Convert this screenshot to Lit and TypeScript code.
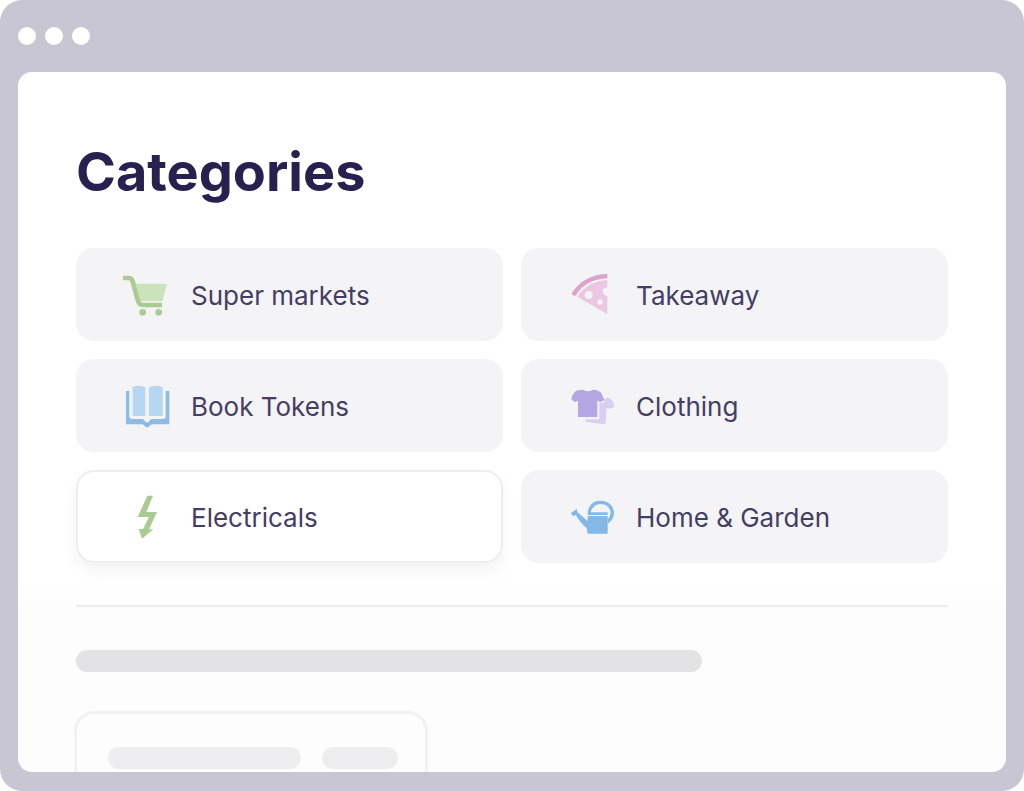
import { LitElement, html, svg, css } from "lit";
import { customElement, state } from "lit/decorators.js";

const cart = svg`
  <path fill="#cbe2bb" d="M77 71H171L158 121Q157 124 153 124H93Q90 124 89 120Z"/>
  <path fill="none" stroke="#aacb92" stroke-width="14" stroke-linejoin="round" d="M39 54H55Q65 54 68 64L83 120Q87 135 98 135H156"/>
  <circle fill="#aacb92" cx="98" cy="157" r="10"/>
  <circle fill="#aacb92" cx="146" cy="157" r="10"/>`;

const book = svg`
  <path fill="#8dbbe3" d="M48 57H58V133Q58 141 66 141H96Q101 141 103 145Q111 158 120 145Q122 141 127 141H159Q167 141 167 133V57H178V157H128Q122 157 119 162Q111 170 104 162Q101 157 96 157H48Z"/>
  <path fill="#b5d7f1" d="M68 45Q88 37 106 46V132H68Z"/>
  <path fill="#b5d7f1" d="M117 46Q138 37 158 45V132H117Z"/>`;

const bolt = svg`
  <path fill="#abcb95" d="M112 35H129L109 84H141L117 136H130L96 164L86 135H99L117 99H83Z"/>`;

const pizza = svg`
  <path fill="#dda3cd" d="M50 100Q85 44 157 41V55Q93 58 64 104Q60 109 55 106Q50 104 50 100Z"/>
  <path fill="#ebc7e3" fill-rule="evenodd" d="M67 110Q98 64 157 60V82Q143 84 143 94Q143 104 157 109V163Z
    M89 105a12 12 0 1 0 24 0a12 12 0 1 0-24 0Z M127 126a8 8 0 1 0 16 0a8 8 0 1 0-16 0Z"/>`;

const shirts = svg`
  <path fill="#d9cff0" d="M147 82Q153 80 157 75Q168 80 173 87L179 104L165 110L155 109L151 157Q120 152 92 149V142H133V92H147Z"/>
  <path fill="#b5a7e3" d="M85 53Q98 62 113 53Q132 54 139 63L148 84L135 91L127 85V135H69V86L60 91L49 82Q54 58 68 55Z"/>`;

const can = svg`
  <path fill="#83b9e7" d="M48 87L65 75L67 84L98 111V96H158V149H98L95 132Q82 124 62 93L54 97Z"/>
  <path fill="#83b9e7" d="M98 93V86Q101 58 126 51Q153 46 170 65Q184 88 170 108Q165 115 158 119V107Q169 94 166 80Q158 59 136 60Q116 60 108 82L107 85H158V93Z"/>`;

interface Category {
  name: string;
  icon: unknown;
  top: number;
}

const categories: Category[] = [
  { name: "Super markets", icon: cart, top: 33 },
  { name: "Takeaway", icon: pizza, top: 33 },
  { name: "Book Tokens", icon: book, top: 30 },
  { name: "Clothing", icon: shirts, top: 30 },
  { name: "Electricals", icon: bolt, top: 27 },
  { name: "Home & Garden", icon: can, top: 27 },
];

@customElement("app-root")
export class AppRoot extends LitElement {
  @state() private selected = "Electricals";

  static styles = css`
    :host {
      display: block;
      background: #fff;
      font-family: Inter, "Liberation Sans", sans-serif;
    }
    * { box-sizing: border-box; }
    .window {
      display: flex;
      flex-direction: column;
      height: 100vh;
      padding: 0 18px 19px;
      border-radius: 22px;
      background: #c9c6d3;
    }
    .bar {
      display: flex;
      align-items: center;
      gap: 9px;
      flex: 0 0 72px;
    }
    .dot {
      width: 18px;
      height: 18px;
      border-radius: 50%;
      background: #fff;
    }
    .page {
      flex: 1;
      min-height: 0;
      overflow: hidden;
      padding: 64px 58px 0;
      border-radius: 14px;
      background: linear-gradient(#fff 500px, #fdfdfd 540px);
    }
    h1 {
      margin: 0 0 40px;
      color: #28214f;
      font-size: 54px;
      line-height: 72px;
      font-weight: 700;
    }
    .grid {
      display: grid;
      grid-template-columns: 1fr 1fr;
      gap: 18px;
    }
    .card {
      display: flex;
      align-items: center;
      gap: 21px;
      min-height: 93px;
      padding: 0 46px;
      border: 0;
      border-radius: 18px;
      background: #f4f4f6;
      color: #443d64;
      font: inherit;
      font-size: 26px;
      line-height: 32px;
      text-align: left;
      cursor: pointer;
    }
    .label { padding-top: 3px; }
    .selected {
      background: #fff;
      box-shadow: inset 0 0 0 2px #eeeef0, 0 8px 16px rgba(0, 0, 0, 0.05);
    }
    .icon {
      flex: none;
      width: 48px;
      height: 47px;
    }
    .rule {
      height: 2px;
      margin: 42px 0 43px;
      border: 0;
      background: #eeeeef;
    }
    .line {
      height: 22px;
      border-radius: 11px;
      background: #eeeef0;
    }
    .lead {
      width: 71.8%;
      background: #e3e3e5;
    }
    .panel {
      display: flex;
      gap: 21px;
      width: 40.6%;
      height: 160px;
      margin: 39px 0 0 -2px;
      padding: 33px 27px 0 31px;
      border: 3px solid #f2f2f3;
      border-radius: 20px;
    }
    .long { flex: 194; }
    .short { flex: 76; }
  `;

  render() {
    return html`
      <div class="window">
        <div class="bar">
          <span class="dot"></span><span class="dot"></span><span class="dot"></span>
        </div>
        <main class="page">
          <h1>Categories</h1>
          <div class="grid">
            ${categories.map(
              (c) => html`
                <button
                  type="button"
                  class="card ${c.name === this.selected ? "selected" : ""}"
                  aria-pressed=${c.name === this.selected}
                  @click=${() => (this.selected = c.name)}
                >
                  <svg class="icon" viewBox="36 ${c.top} 144 141" aria-hidden="true">${c.icon}</svg>
                  <span class="label">${c.name}</span>
                </button>
              `
            )}
          </div>
          <hr class="rule" />
          <div class="line lead"></div>
          <div class="panel">
            <div class="line long"></div>
            <div class="line short"></div>
          </div>
        </main>
      </div>
    `;
  }
}
